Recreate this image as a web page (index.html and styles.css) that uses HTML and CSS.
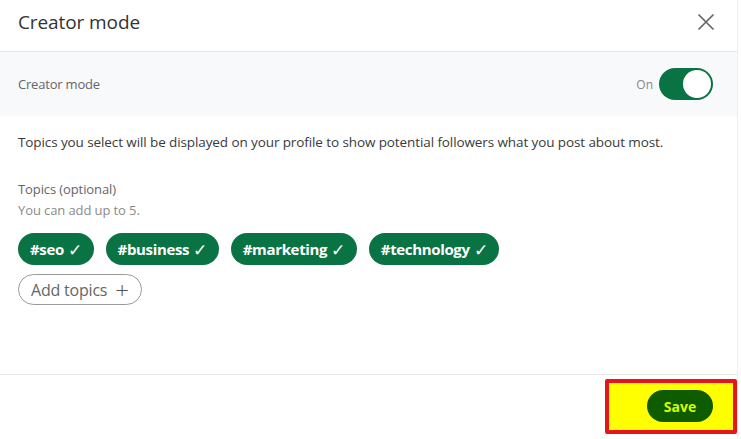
FILE: index.html
```html
<!DOCTYPE html>
<html>
<head>
<meta charset="utf-8">
<link rel="stylesheet" href="styles.css">
</head>
<body>
<div class="dialog">
  <header class="header">
    <h1 class="title">Creator mode</h1>
    <button class="close" aria-label="Close">
      <svg width="18" height="18" viewBox="0 0 18 18"><path d="M1.5 1.5 L16.5 16.5 M16.5 1.5 L1.5 16.5" stroke="#666" stroke-width="1.7" fill="none"/></svg>
    </button>
  </header>
  <div class="band">
    <span class="band-label">Creator mode</span>
    <div class="toggle-wrap">
      <span class="on">On</span>
      <span class="toggle"><span class="knob"></span></span>
    </div>
  </div>
  <main class="body">
    <p class="desc">Topics you select will be displayed on your profile to show potential followers what you post about most.</p>
    <div class="topics-label">Topics (optional)</div>
    <div class="topics-hint">You can add up to 5.</div>
    <div class="pills">
      <span class="pill">#seo <span class="check">✓</span></span>
      <span class="pill">#business <span class="check">✓</span></span>
      <span class="pill">#marketing <span class="check">✓</span></span>
      <span class="pill">#technology <span class="check">✓</span></span>
    </div>
    <button class="add">Add topics <span class="plus">+</span></button>
  </main>
  <footer class="footer">
    <div class="highlight">
      <button class="save">Save</button>
    </div>
  </footer>
</div>
</body>
</html>
```
FILE: styles.css
```css
* { box-sizing: border-box; }
html, body { margin: 0; padding: 0; background: #fff; }
body { font-family: "Open Sans", "Noto Sans", sans-serif; width: 741px; height: 439px; overflow: hidden; }
.dialog { width: 738px; height: 439px; display: flex; flex-direction: column; border-right: 1px solid #eceff1; }
.header { height: 52px; border-bottom: 1px solid #e6e6e6; display: flex; align-items: center; justify-content: space-between; padding: 0 22px 8px 18px; }
.title { margin: 0; font-weight: 400; font-size: 19px; color: #333; letter-spacing: -0.1px; }
.close { background: none; border: 0; padding: 0; display: flex; }
.band { height: 64px; background: #f8f9fa; display: flex; align-items: center; justify-content: space-between; padding: 0 24px 0 18px; }
.band-label { font-size: 13px; color: #666; letter-spacing: -0.2px; }
.toggle-wrap { display: flex; align-items: center; gap: 6px; }
.on { font-size: 12px; color: #888; }
.toggle { width: 54px; height: 32px; border-radius: 16px; background: #0a7343; display: flex; align-items: center; justify-content: flex-end; padding: 2px; }
.knob { width: 28px; height: 28px; border-radius: 50%; background: #fff; }
.body { flex: 1; padding: 16px 18px 0; }
.desc { margin: 0 0 27px; font-size: 13.5px; color: #3a3a3a; letter-spacing: -0.1px; line-height: 20px; }
.topics-label { font-size: 13px; color: #666; line-height: 21px; letter-spacing: -0.1px; }
.topics-hint { font-size: 13px; color: #8a8a8a; line-height: 21px; letter-spacing: -0.1px; }
.pills { display: flex; gap: 12px; margin-top: 12px; }
.pill { height: 32px; border-radius: 16px; background: #0a7343; color: #fff; font-weight: 700; font-size: 15px; display: inline-flex; align-items: center; padding: 0 12px; letter-spacing: -0.35px; }
.check { font-weight: 400; margin-left: 4px; font-size: 17px; }
.add { margin-top: 9px; height: 31px; border-radius: 16px; border: 1px solid #9a9a9a; background: #fff; color: #666; font-family: inherit; font-size: 16px; padding: 0 12px 0 12px; display: inline-flex; align-items: center; letter-spacing: -0.2px; }
.plus { font-size: 24px; margin-left: 8px; color: #555; font-weight: 300; line-height: 1; }
.footer { height: 65px; border-top: 1px solid #e6e6e6; display: flex; justify-content: flex-end; align-items: center; padding-bottom: 2px; }
.highlight { width: 132px; height: 55px; border: 4px solid #e8141c; background: #ffff00; display: flex; align-items: center; justify-content: flex-end; padding-right: 20px; border-radius: 2px; }
.save { width: 66px; height: 32px; border-radius: 16px; border: 0; background: #0f5c00; color: #d4ff00; font-family: inherit; font-weight: 700; font-size: 14px; padding: 0; }
```
